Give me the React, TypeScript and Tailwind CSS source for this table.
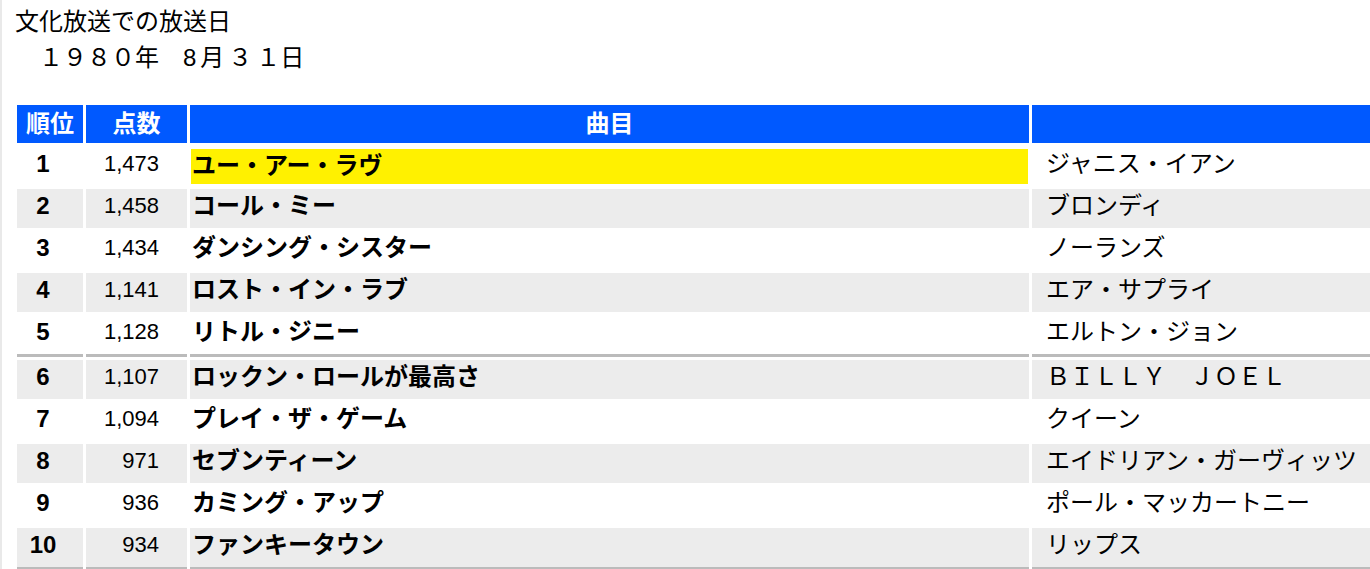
import React from "react";

type Row = { rank: number; score: string; title: string; artist: string; sepAfter?: boolean };

const rows: Row[] = [
  { rank: 1, score: "1,473", title: "ユー・アー・ラヴ", artist: "ジャニス・イアン" },
  { rank: 2, score: "1,458", title: "コール・ミー", artist: "ブロンディ" },
  { rank: 3, score: "1,434", title: "ダンシング・シスター", artist: "ノーランズ" },
  { rank: 4, score: "1,141", title: "ロスト・イン・ラブ", artist: "エア・サプライ" },
  { rank: 5, score: "1,128", title: "リトル・ジニー", artist: "エルトン・ジョン", sepAfter: true },
  { rank: 6, score: "1,107", title: "ロックン・ロールが最高さ", artist: "ＢＩＬＬＹ　ＪＯＥＬ" },
  { rank: 7, score: "1,094", title: "プレイ・ザ・ゲーム", artist: "クイーン" },
  { rank: 8, score: "971", title: "セブンティーン", artist: "エイドリアン・ガーヴィッツ" },
  { rank: 9, score: "936", title: "カミング・アップ", artist: "ポール・マッカートニー" },
  { rank: 10, score: "934", title: "ファンキータウン", artist: "リップス", sepAfter: true },
];

export default function App() {
  return (
    <div
      className="w-[1370px] h-[569px] overflow-hidden bg-white border-l-2 border-[#e9e9e9] text-black"
      style={{ fontFamily: '"Liberation Sans", "Noto Sans CJK JP", sans-serif' }}
    >
      <div className="pl-[13px] pt-[4px] text-[24px] leading-[36px]">
        <div>文化放送での放送日</div>
        <div className="whitespace-pre">
          {"　１９８０年　"}
          <span className="mr-[4px]">8</span>
          {"月"}
          <span className="ml-[4px]">３</span>
          <span className="ml-[4px]">１</span>
          {"日"}
        </div>
      </div>
      <table className="ml-[12px] mt-[26px] border-separate border-spacing-[3px] table-fixed w-[1500px] text-[24px]">
        <colgroup>
          <col className="w-[66px]" />
          <col className="w-[101px]" />
          <col className="w-[839px]" />
          <col />
        </colgroup>
        <thead>
          <tr>
            <th className="h-[38px] p-0 bg-[#0059ff] text-white font-bold text-center leading-[36px]">順位</th>
            <th className="h-[38px] p-0 bg-[#0059ff] text-white font-bold text-center leading-[36px]">点数</th>
            <th className="h-[38px] p-0 bg-[#0059ff] text-white font-bold text-center leading-[36px]">曲目</th>
            <th className="h-[38px] p-0 bg-[#0059ff]"></th>
          </tr>
        </thead>
        <tbody>
          {rows.map((r) => {
            const bg = r.rank % 2 === 0 ? "bg-[#ececec]" : "bg-white";
            const sep = r.sepAfter ? "h-[42px] border-b-[3px] border-[#bbbbbb]" : "h-[39px]";
            return (
              <tr key={r.rank}>
                <td className={`${bg} ${sep} p-0 pb-[6px] pr-[14px] leading-[33px] text-center font-bold align-middle`}>{r.rank}</td>
                <td className={`${bg} ${sep} p-0 pb-[6px] pr-[28px] leading-[33px] text-right text-[22px] align-middle`}>{r.score}</td>
                {r.rank === 1 ? (
                  <td className={`${bg} ${sep} px-[1px] pt-[3px] pb-[2px] font-bold align-middle`}>
                    <div className="bg-[#fff100] h-[35px] pl-[1px] leading-[33px]">{r.title}</div>
                  </td>
                ) : (
                  <td className={`${bg} ${sep} p-0 pb-[6px] pl-[2px] leading-[33px] font-bold align-middle`}>{r.title}</td>
                )}
                <td className={`${bg} ${sep} p-0 pb-[6px] pl-[14px] leading-[33px] align-middle whitespace-nowrap`}>{r.artist}</td>
              </tr>
            );
          })}
        </tbody>
      </table>
    </div>
  );
}
